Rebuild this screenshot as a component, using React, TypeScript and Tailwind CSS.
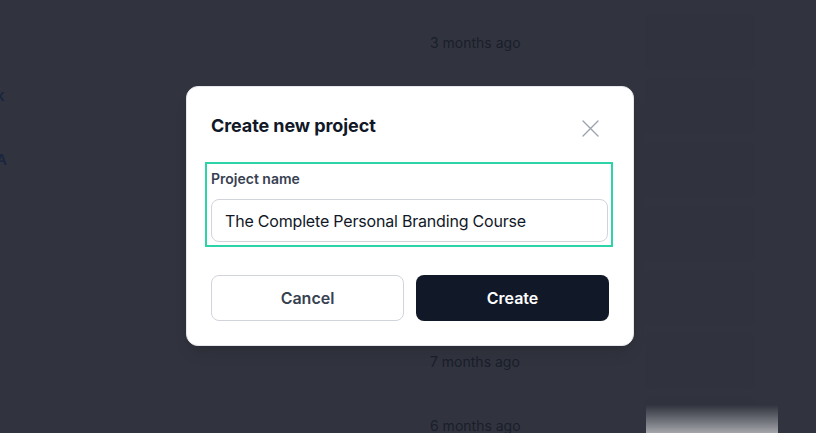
import { useState } from 'react';

// rows 1-4 sit behind the dialog, so they carry no visible date
const rows = ['3 months ago', '', '', '', '', '7 months ago', '6 months ago'];

const App = () => {
  const [name, setName] = useState('The Complete Personal Branding Course');

  return (
    <div
      className="relative w-[816px] h-[433px] overflow-hidden bg-[#31343e]"
      style={{ fontFamily: 'Inter, "Noto Sans", sans-serif' }}
    >
      {/* Dimmed page behind the dialog */}
      <div className="flex flex-col pt-[10.5px]">
        {rows.map((date, i) => (
          <div key={i} className="h-[63.8px] flex items-center">
            <div className="w-[120px] h-[60px] flex items-start">
              {(i === 1 || i === 2) && (
                <span className="-ml-[4px] mt-[9px] text-[15px] font-semibold text-[#1b2440]">
                  {i === 1 ? 'k' : 'A'}
                </span>
              )}
            </div>
            <span className="ml-[310px] w-[200px] text-[14px] text-[#1a1e2b]">{date}</span>
            <div className="ml-[15px] w-[110px] h-[56px] rounded-md bg-[#30333d]" />
          </div>
        ))}
      </div>
      <div className="absolute left-[646px] top-[405px] w-[132px] h-[28px] bg-gradient-to-b from-[#31343e] to-[#a4a6ab]" />

      {/* Dialog */}
      <div className="absolute left-[186px] top-[86px] w-[448px] rounded-xl border border-[#e5e7eb] bg-white p-6 shadow-lg">
        <div className="flex items-center justify-between h-[28px]">
          <h2 className="text-[18px] font-bold text-[#111827] tracking-[-0.005em]">Create new project</h2>
          <button className="mr-[10px] mt-[6px] text-[#9ca3af]">
            <svg width="17" height="17" viewBox="0 0 17 17" fill="none" stroke="currentColor" strokeWidth="1.4" strokeLinecap="round">
              <path d="M1 1L16 16M16 1L1 16" />
            </svg>
          </button>
        </div>

        <div className="mt-[23px] -ml-[6px] -mr-[4px] border-2 border-[#2dd4a8] pl-[4px] pr-[3px] pt-[5px] pb-[3px]">
          <label className="block text-[14px] font-semibold text-[#374151] leading-5">Project name</label>
          <input
            value={name}
            onChange={(e) => setName(e.target.value)}
            className="mt-[10px] block w-full h-[43px] rounded-lg border border-[#d1d5db] px-[13px] text-[16px] tracking-[-0.012em] text-[#111827] outline-none"
          />
        </div>

        <div className="mt-[28px] grid grid-cols-2 gap-3">
          <button className="h-[46px] pb-[1px] rounded-lg border border-[#d1d5db] bg-white text-[16px] font-semibold text-[#374151]">
            Cancel
          </button>
          <button className="h-[46px] pb-[1px] rounded-lg bg-[#111827] text-[16px] font-semibold text-white">
            Create
          </button>
        </div>
      </div>
    </div>
  );
};

export default App;
